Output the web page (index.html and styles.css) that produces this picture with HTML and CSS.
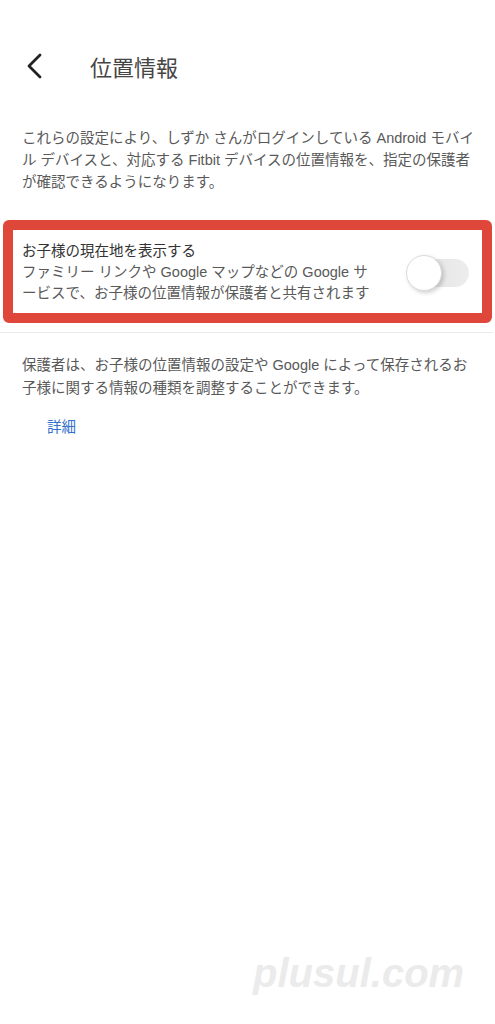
FILE: index.html
```html
<!DOCTYPE html>
<html lang="ja">
  <head>
    <meta charset="UTF-8" />
    <meta name="viewport" content="width=device-width, initial-scale=1.0" />
    <title>位置情報</title>
    <link rel="stylesheet" href="styles.css">
  </head>
  <body>
    <main class="screen">
      <!--
        Header
      -->
      <header class="topbar">
        <button class="back" type="button" aria-label="戻る">
          <svg width="18" height="26" viewBox="0 0 18 26" aria-hidden="true">
            <path d="M15 2 L4 13 L15 24" fill="none" stroke="#222" stroke-width="2.8" stroke-linecap="round" stroke-linejoin="round" />
          </svg>
        </button>
        <h1 class="title">位置情報</h1>
      </header>

      <p class="intro">
        これらの設定により、しずか さんがログインしている Android モバイル デバイスと、対応する Fitbit デバイスの位置情報を、指定の保護者が確認できるようになります。
      </p>

      <!--
        Setting row (highlighted)
      -->
      <section class="highlight">
        <div class="setting">
          <div class="setting-text">
            <div class="setting-title">お子様の現在地を表示する</div>
            <div class="setting-desc">ファミリー リンクや Google マップなどの Google サービスで、お子様の位置情報が保護者と共有されます</div>
          </div>
          <button class="toggle" type="button" role="switch" aria-checked="false">
            <span class="knob"></span>
          </button>
        </div>
      </section>
      <hr class="divider" />

      <p class="note">
        保護者は、お子様の位置情報の設定や Google によって保存されるお子様に関する情報の種類を調整することができます。
      </p>
      <a class="more" href="#">詳細</a>
    </main>

    <div class="watermark">plusul.com</div>
  </body>
</html>
```

FILE: styles.css
```css
/*
  Global styles
*/

:root {
  --text: hsl(0, 0%, 35%);
  --dark: hsl(0, 0%, 20%);
  --red: hsl(5, 72%, 55%);
  --blue: hsl(216, 60%, 50%);
  --line: hsl(0, 0%, 92%);
}
* {
  margin: 0;
  padding: 0;
  box-sizing: border-box;
  font-family: "Liberation Sans", "Noto Sans CJK JP", sans-serif;
}
body {
  position: relative;
  min-height: 100vh;
  background-color: white;
  line-break: loose;
}

/*
  Header
*/

.topbar {
  display: flex;
  align-items: center;
  height: 44px;
  margin-top: 44px;
  padding-left: 25px;
}
.back {
  display: flex;
  border: none;
  background: none;
  margin-right: 47px;
}
.title {
  font-size: 22px;
  font-weight: 400;
  color: hsl(0, 0%, 27%);
}

/*
  Content
*/

.intro {
  margin-top: 39px;
  padding: 0 14px 0 22px;
  font-size: 14.5px;
  line-height: 22px;
  color: var(--text);
}
.highlight {
  margin: 27px 3px 0;
  border: 10px solid var(--red);
  border-radius: 6px;
}
.setting {
  display: flex;
  align-items: center;
  padding: 11px 13px 9px 9px;
}
.setting-text {
  width: 350px;
  font-size: 14.5px;
  line-height: 21px;
  color: var(--text);
}
.setting-title {
  color: var(--dark);
}
.toggle {
  position: relative;
  width: 62px;
  height: 28px;
  margin-left: auto;
  border: none;
  border-radius: 14px;
  background: linear-gradient(90deg, hsl(0, 0%, 88%), hsl(0, 0%, 93%));
}
.knob {
  position: absolute;
  top: -4px;
  left: -1px;
  width: 36px;
  height: 36px;
  border-radius: 50%;
  background-color: white;
  border: 1px solid hsl(0, 0%, 86%);
  box-shadow: 2px 2px 4px rgb(0 0 0 / 18%);
}
.divider {
  margin: 9px 2px 0 0;
  border: none;
  border-top: 1px solid var(--line);
}
.note {
  margin-top: 21px;
  padding: 0 14px 0 22px;
  font-size: 14.5px;
  line-height: 23px;
  color: var(--text);
}
.more {
  display: inline-block;
  margin: 16px 0 0 47px;
  font-size: 14.5px;
  line-height: 23px;
  color: var(--blue);
  text-decoration: none;
}

/*
  Watermark
*/

.watermark {
  position: absolute;
  top: 953px;
  left: 253px;
  font-size: 40px;
  font-weight: 700;
  font-style: italic;
  line-height: 40px;
  color: hsl(0, 0%, 92%);
}
```
